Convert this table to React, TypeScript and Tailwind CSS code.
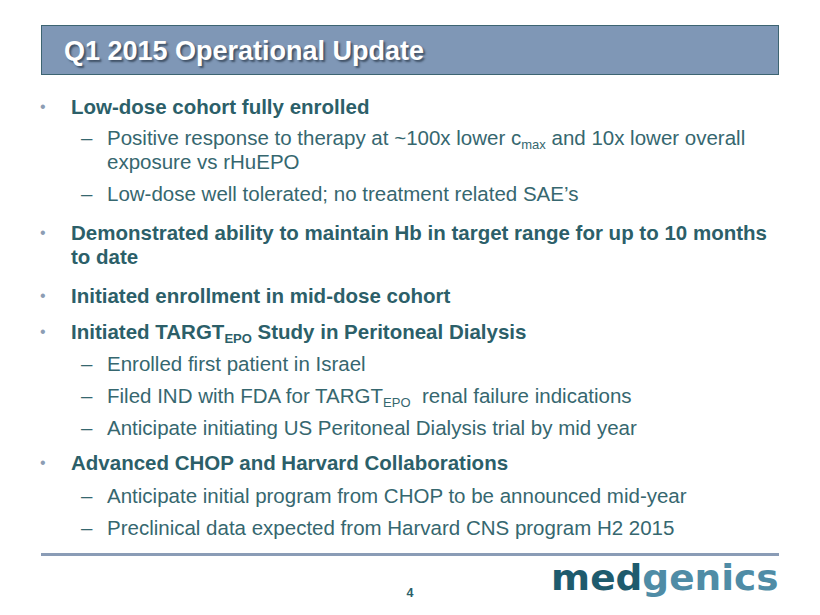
import React from "react";

const Bullet = ({ mt, children }: { mt: string; children: React.ReactNode }) => (
  <div className={`flex ${mt}`}>
    <span className="w-[31px] shrink-0 text-[#8c9db4] text-[16px] leading-[24px]">•</span>
    <div className="font-bold text-[#2c5f69]">{children}</div>
  </div>
);

const Sub = ({ mt, children }: { mt: string; children: React.ReactNode }) => (
  <div className={`flex pl-[41px] ${mt}`}>
    <span className="w-[26px] shrink-0 text-[#36676f]">–</span>
    <div className="text-[#36676f]">{children}</div>
  </div>
);

const Low = ({ children }: { children: React.ReactNode }) => (
  <span className="text-[13px] leading-none relative top-[4px]">{children}</span>
);

export default function App() {
  return (
    <div
      className="w-[820px] h-[615px] bg-white overflow-hidden"
      style={{ fontFamily: '"Liberation Sans", Arial, sans-serif' }}
    >
      <div className="pt-[25px] pl-[41px]">
        <div className="w-[738px] h-[50px] bg-[#7f97b6] border-[1.5px] border-[#3d6472] pl-[22px] pt-[10px]">
          <div className="text-white font-bold text-[27px] leading-[31px] [text-shadow:2px_2px_2px_rgba(30,45,60,0.65)]">
            Q1 2015 Operational Update
          </div>
        </div>
      </div>

      <div className="mt-[20px] pl-[40px] text-[20.5px] leading-[24px] whitespace-nowrap">
        <Bullet mt="mt-0">Low-dose cohort fully enrolled</Bullet>
        <Sub mt="mt-[7px]">
          Positive response to therapy at ~100x lower c<Low>max</Low> and 10x lower overall
          <br />
          exposure vs rHuEPO
        </Sub>
        <Sub mt="mt-[8px]">Low-dose well tolerated; no treatment related SAE’s</Sub>
        <Bullet mt="mt-[15px]">
          Demonstrated ability to maintain Hb in target range for up to 10 months
          <br />
          to date
        </Bullet>
        <Bullet mt="mt-[15px]">Initiated enrollment in mid-dose cohort</Bullet>
        <Bullet mt="mt-[12px]">
          Initiated TARGT<Low>EPO</Low> Study in Peritoneal Dialysis
        </Bullet>
        <Sub mt="mt-[8px]">Enrolled first patient in Israel</Sub>
        <Sub mt="mt-[8px]">
          Filed IND with FDA for TARGT<Low>EPO</Low>&nbsp; renal failure indications
        </Sub>
        <Sub mt="mt-[8px]">Anticipate initiating US Peritoneal Dialysis trial by mid year</Sub>
        <Bullet mt="mt-[11px]">Advanced CHOP and Harvard Collaborations</Bullet>
        <Sub mt="mt-[9px]">Anticipate initial program from CHOP to be announced mid-year</Sub>
        <Sub mt="mt-[8px]">Preclinical data expected from Harvard CNS program H2 2015</Sub>
      </div>

      <div className="ml-[41px] w-[738px] mt-[13px] h-[3px] bg-[#8a9cb6]" />

      <div className="ml-[41px] w-[738px] grid grid-cols-[1fr_auto_1fr] items-start">
        <div />
        <div className="mt-[30px] text-[12.5px] leading-[14px] font-bold text-[#2c5f69]">4</div>
        <div className="flex justify-end">
          <div
            className="mt-[2px] text-[35px] leading-[40px] font-bold tracking-[0px] origin-right scale-x-[1.07]"
            style={{ fontFamily: '"DejaVu Sans", Verdana, sans-serif' }}
          >
            <span className="text-[#1e5b6d]">med</span>
            <span className="text-[#4f8ca6]">genics</span>
          </div>
        </div>
      </div>
    </div>
  );
}
